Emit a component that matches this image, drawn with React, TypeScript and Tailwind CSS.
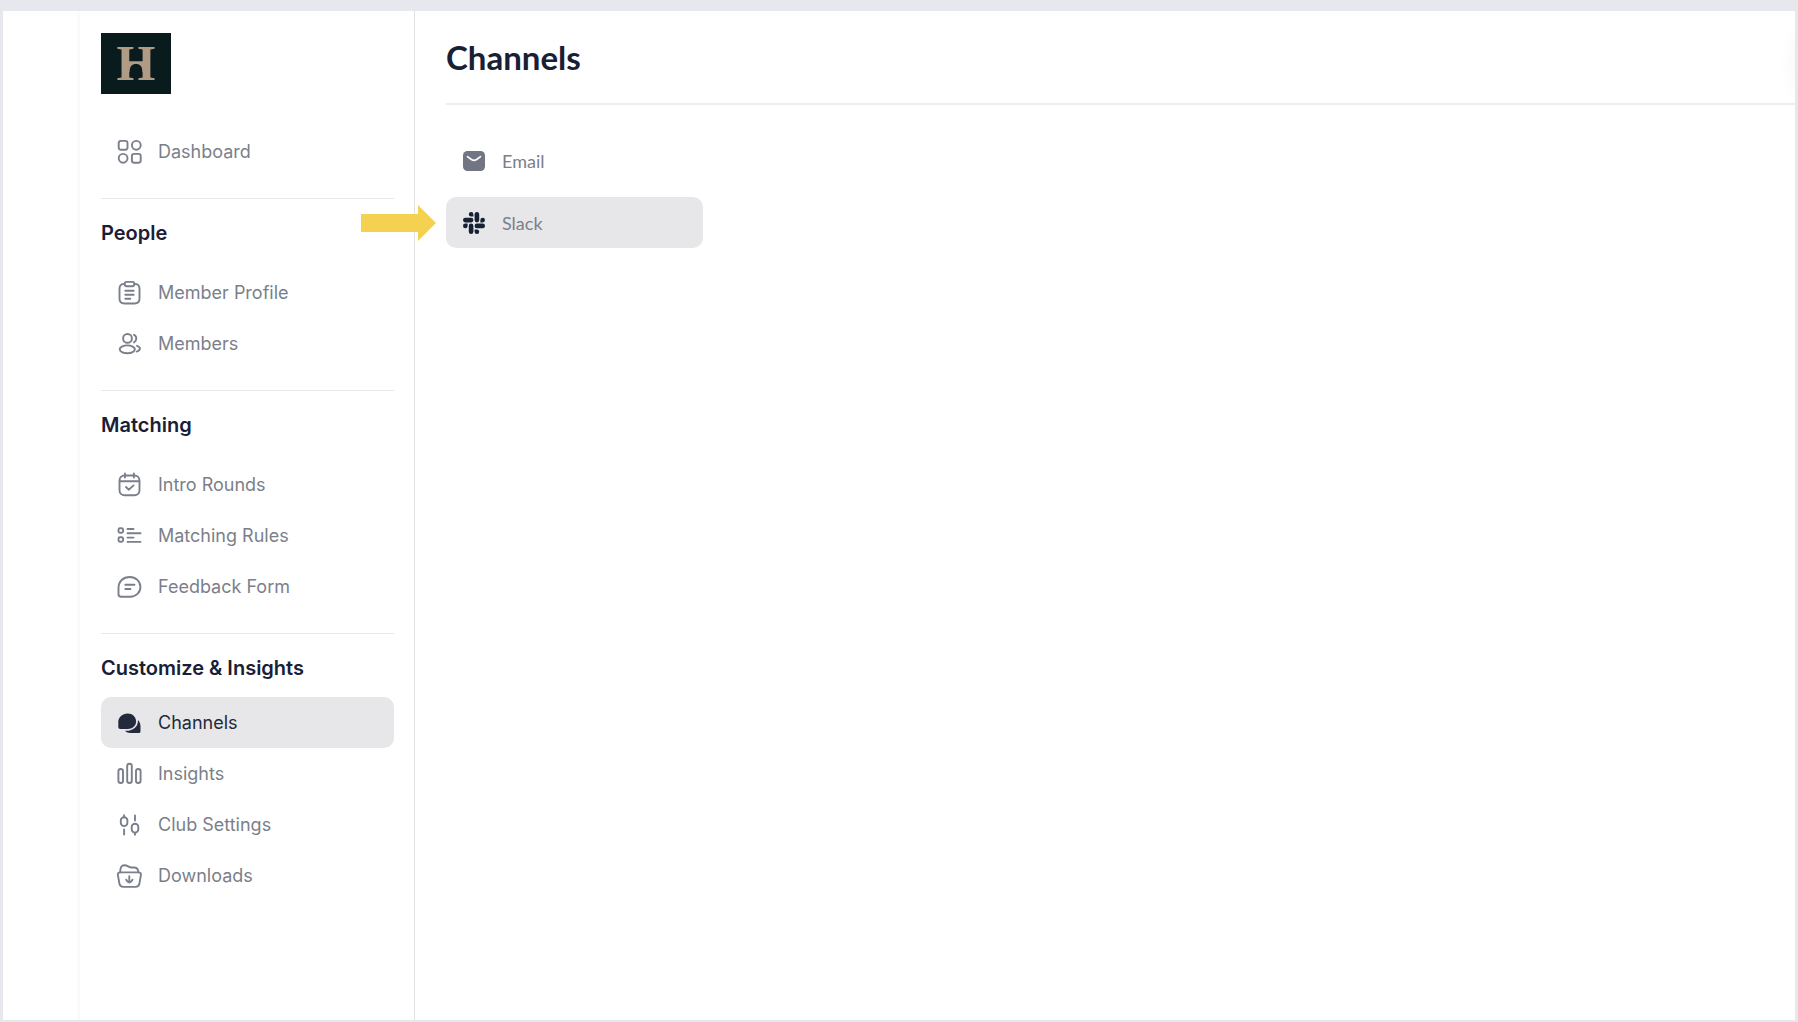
import type { ReactNode } from "react";

function Icon({ children }: { children: ReactNode }) {
  return (
    <svg
      className="size-7 shrink-0"
      viewBox="0 0 28 28"
      fill="none"
      stroke="currentColor"
      strokeWidth="1.9"
      strokeLinecap="round"
      strokeLinejoin="round"
      aria-hidden="true"
    >
      {children}
    </svg>
  );
}

const icons = {
  dashboard: (
    <Icon>
      <rect x="3.7" y="2.9" width="8.8" height="8.8" rx="2.2" />
      <circle cx="21.3" cy="7.3" r="4.4" />
      <circle cx="8.1" cy="20.3" r="4.4" />
      <rect x="16.9" y="15.9" width="8.8" height="8.8" rx="2.2" />
    </Icon>
  ),
  clipboard: (
    <Icon>
      <path d="M9.5 4.9C6 4.9 4.5 6.3 4.5 9.6v10.2c0 3.3 1.6 4.7 5 4.7h10c3.4 0 5-1.4 5-4.7V9.6c0-3.3-1.5-4.7-5-4.7" />
      <rect x="9.7" y="2.9" width="9.6" height="4.4" rx="2" />
      <path d="M10.3 11.8h8.4M10.3 15.8h8.4M10.3 19.7h5" />
    </Icon>
  ),
  members: (
    <Icon>
      <circle cx="12.5" cy="8.4" r="4.4" />
      <ellipse cx="12.3" cy="19.3" rx="7.6" ry="3.9" />
      <path d="M19 4.8c1.5.7 2.3 2.100 2.300 3.700S20.500 11.600 19 12.400M22 15.800c1.900.6 2.900 1.500 2.900 2.800 0 1.300-1.100 2.400-3.200 3" />
    </Icon>
  ),
  calendar: (
    <Icon>
      <rect x="4.5" y="4.5" width="20" height="19.7" rx="5" />
      <path d="M10 2.500v4M18.900 2.500v4M4.800 10.300h19.400M11 16l2.700 2.700 4.900-4.300" />
    </Icon>
  ),
  rules: (
    <Icon>
      <rect x="3.5" y="6.2" width="4.6" height="4.6" rx="1.5" />
      <rect x="3.5" y="15.2" width="4.6" height="4.6" rx="1.5" />
      <path d="M12.500 7h6M12.500 11.200h13M12.500 15.600h6M12.500 19.900h13" />
    </Icon>
  ),
  feedback: (
    <Icon>
      <path d="M14.800 4C20.800 4 25.400 8.400 25.400 13.900S21 23.700 15.300 23.700H6c-1.500 0-2.500-.9-2.500-2.400v-6.400C3.500 8.400 8.300 4 14.800 4Z" />
      <path d="M10.300 11.800h9.200M10.300 16h5.200" />
    </Icon>
  ),
  channels: (
    <Icon>
      <path
        d="M12.600 4.600c4.900 0 8.500 3.500 8.500 7.900 0 4.300-3.700 7.500-8.300 7.500H5.300c-1.300 0-2-.7-2-2v-4.800c0-5 4.200-8.600 9.300-8.600Z"
        fill="currentColor"
        stroke="none"
      />
      <path
        d="M22.900 11c1.600 1.500 2.600 3.600 2.600 6.300v4.900c0 1.200-.6 1.800-1.800 1.800h-8.300c-2.200 0-4.100-.8-5.400-2.200 7.700.6 13.500-4 12.900-10.800Z"
        fill="currentColor"
        stroke="none"
      />
    </Icon>
  ),
  insights: (
    <Icon>
      <rect x="3.4" y="9" width="4.6" height="14" rx="2.3" />
      <rect x="12.2" y="3.8" width="4.6" height="19.2" rx="2.3" />
      <rect x="21" y="9" width="4.6" height="14" rx="2.3" />
    </Icon>
  ),
  settings: (
    <Icon>
      <rect x="5.8" y="6.3" width="6.6" height="8.8" rx="3.3" />
      <path d="M9.100 4.300v2M9.100 18.500v5M20 4.500v5M20 21.800v1.900" />
      <rect x="16.7" y="12.8" width="6.6" height="8.8" rx="3.3" />
    </Icon>
  ),
  downloads: (
    <Icon>
      <path d="M5.200 10.400h18.200c2 0 2.800.9 2.500 2.700l-1.500 8.600c-.4 2.300-1.600 3.200-3.800 3.200H8.200c-2.200 0-3.400-.9-3.800-3.200L2.900 13.100c-.3-1.800.4-2.700 2.300-2.700Z" />
      <path d="M5.200 10.200c-.1-4.300 1-6.900 4.200-6.900 3.500 0 4 2.200 7.400 2.200h2.100c3 0 4.400 1.300 4.500 4.700M14.300 14.200v6.200M11.200 17.700c.6 1.600 1.600 2.700 3.100 2.900 1.500-.2 2.600-1.300 3.200-2.900" />
    </Icon>
  ),
};

type IconName = keyof typeof icons;
type Item = { label: string; icon: IconName; active?: boolean };

const sections: { title: string; compact?: boolean; items: Item[] }[] = [
  {
    title: "People",
    items: [
      { label: "Member Profile", icon: "clipboard" },
      { label: "Members", icon: "members" },
    ],
  },
  {
    title: "Matching",
    items: [
      { label: "Intro Rounds", icon: "calendar" },
      { label: "Matching Rules", icon: "rules" },
      { label: "Feedback Form", icon: "feedback" },
    ],
  },
  {
    title: "Customize & Insights",
    compact: true,
    items: [
      { label: "Channels", icon: "channels", active: true },
      { label: "Insights", icon: "insights" },
      { label: "Club Settings", icon: "settings" },
      { label: "Downloads", icon: "downloads" },
    ],
  },
];

function NavLink({ label, icon, active }: Item) {
  return (
    <a
      href="#"
      aria-current={active ? "page" : undefined}
      className={
        active
          ? "flex h-[51px] items-center gap-[15px] rounded-[10px] bg-[#e7e7e9] pl-[14px] text-lg text-[#232a3b]"
          : "flex h-[51px] items-center gap-[15px] rounded-[10px] pl-[14px] text-lg text-[#7b7f8b]"
      }
    >
      {icons[icon]}
      <span>{label}</span>
    </a>
  );
}

function Logo() {
  return (
    <svg className="h-[61px] w-[70px]" viewBox="0 0 70 61" role="img" aria-label="Club logo">
      <rect width="70" height="61" fill="#0a1b1e" />
      <g fill="#b09c86">
        <text
          x="35"
          y="47"
          textAnchor="middle"
          fontFamily="Liberation Serif, serif"
          fontWeight="700"
          fontSize="50"
        >
          H
        </text>
        <path d="M27 29v10h1.500c0-5.500 2.500-8 6.500-8s6.500 2.500 6.500 8H43V29Z" />
      </g>
    </svg>
  );
}

function Sidebar() {
  return (
    <aside className="w-[335px] shrink-0 border-r border-[#dfe0e4] pt-[22px] pr-5 pl-[21px]">
      <Logo />
      <nav aria-label="Main" className="mt-8">
        <NavLink label="Dashboard" icon="dashboard" />
        {sections.map((section) => (
          <section key={section.title} className="mt-[21px] border-t border-[#e8e8ea]">
            <h2
              className={
                section.compact
                  ? "h-[63px] pt-5 text-xl font-semibold text-[#182035]"
                  : "h-[68px] pt-5 text-xl font-semibold text-[#182035]"
              }
            >
              {section.title}
            </h2>
            {section.items.map((item) => (
              <NavLink key={item.label} {...item} />
            ))}
          </section>
        ))}
      </nav>
    </aside>
  );
}

function EmailIcon() {
  return (
    <svg className="size-[22px] shrink-0" viewBox="0 0 22 22" aria-hidden="true">
      <rect x="0" y="1" width="22" height="20" rx="4.5" fill="#727684" />
      <path
        d="M4.500 6.600l3.900 2.900c1.700 1.200 3.500 1.200 5.200 0l3.900-2.900"
        fill="none"
        stroke="#fff"
        strokeWidth="1.6"
        strokeLinecap="round"
      />
    </svg>
  );
}

function SlackIcon() {
  return (
    <svg className="size-[22px] shrink-0" viewBox="0 0 24 24" fill="#182035" aria-hidden="true">
      <path d="M5.042 15.165a2.528 2.528 0 0 1-2.520 2.523A2.528 2.528 0 0 1 0 15.165a2.527 2.527 0 0 1 2.522-2.520h2.520v2.520zM6.313 15.165a2.527 2.527 0 0 1 2.521-2.520 2.527 2.527 0 0 1 2.521 2.520v6.313A2.528 2.528 0 0 1 8.834 24a2.528 2.528 0 0 1-2.521-2.522v-6.313zM8.834 5.042a2.528 2.528 0 0 1-2.521-2.520A2.528 2.528 0 0 1 8.834 0a2.528 2.528 0 0 1 2.521 2.522v2.520H8.834zM8.834 6.313a2.528 2.528 0 0 1 2.521 2.521 2.528 2.528 0 0 1-2.521 2.521H2.522A2.528 2.528 0 0 1 0 8.834a2.528 2.528 0 0 1 2.522-2.521h6.312zM18.956 8.834a2.528 2.528 0 0 1 2.522-2.521A2.528 2.528 0 0 1 24 8.834a2.528 2.528 0 0 1-2.522 2.521h-2.522V8.834zM17.688 8.834a2.528 2.528 0 0 1-2.523 2.521 2.527 2.527 0 0 1-2.520-2.521V2.522A2.527 2.527 0 0 1 15.165 0a2.528 2.528 0 0 1 2.523 2.522v6.312zM15.165 18.956a2.528 2.528 0 0 1 2.523 2.522A2.528 2.528 0 0 1 15.165 24a2.527 2.527 0 0 1-2.520-2.522v-2.522h2.520zM15.165 17.688a2.527 2.527 0 0 1-2.520-2.523 2.526 2.526 0 0 1 2.520-2.520h6.313A2.527 2.527 0 0 1 24 15.165a2.528 2.528 0 0 1-2.522 2.523h-6.313z" />
    </svg>
  );
}

export default function App() {
  return (
    <div className="flex min-h-screen flex-col bg-[#e7e8ed] px-[3px] pt-[11px] pb-[2px] font-['Inter',sans-serif]">
      <div className="relative flex grow overflow-hidden bg-white">
        <div className="w-[77px] shrink-0 border-r-[3px] border-[#fafafb]" />
        <Sidebar />
        <main className="min-w-0 grow pl-[31px]">
          <header className="h-[94px] border-b-2 border-[#eeeef0] pt-[26px]">
            <h1 className="font-['Lato',sans-serif] text-[33px] leading-10 font-bold text-[#182035]">Channels</h1>
          </header>
          <nav
            aria-label="Channels"
            className="mt-[30px] flex w-[257px] flex-col gap-[11px] font-['Lato',sans-serif] text-lg text-[#7b7f8b]"
          >
            <a href="#" className="flex h-[51px] items-center gap-[17px] rounded-[10px] pl-[17px]">
              <EmailIcon />
              <span>Email</span>
            </a>
            <a
              href="#"
              aria-current="page"
              className="relative flex h-[51px] items-center gap-[17px] rounded-[10px] bg-[#e7e7e9] pl-[17px]"
            >
              <svg
                className="absolute top-[8px] right-full mr-[10px] h-9 w-[75px]"
                viewBox="0 0 75 36"
                fill="#f5d152"
                aria-hidden="true"
              >
                <path d="M0 9h57V0l18 18-18 18v-9H0Z" />
              </svg>
              <SlackIcon />
              <span>Slack</span>
            </a>
          </nav>
        </main>
        <div className="absolute top-6 -right-4 h-14 w-4 rounded-full shadow-[0_0_18px_rgba(0,0,0,0.05)]" />
      </div>
    </div>
  );
}
